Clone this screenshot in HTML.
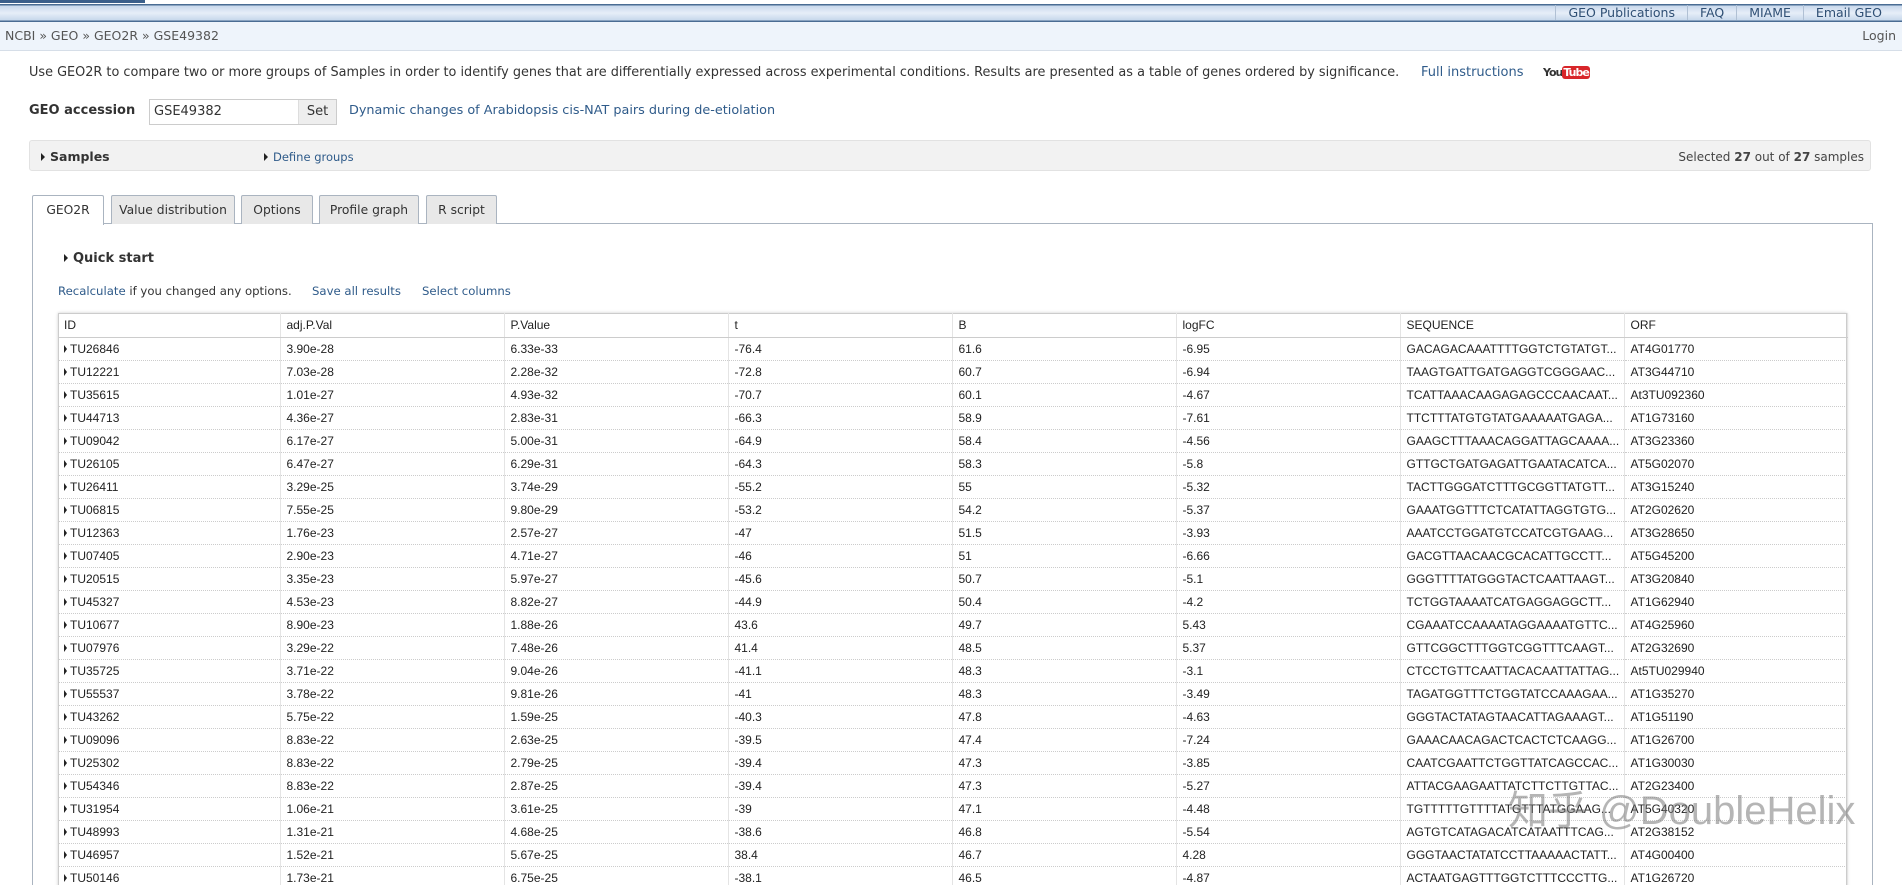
<!DOCTYPE html>
<html style="overflow:hidden;width:1902px;height:885px"><head><meta charset="utf-8"><style>
*{margin:0;padding:0;box-sizing:border-box}
body{width:1902px;height:885px;overflow:hidden;background:#fff;font-family:"DejaVu Sans",Verdana,sans-serif;font-size:13px;color:#333;position:relative}
.abs{position:absolute;white-space:nowrap}
a,.lk{color:#2f5b8a;text-decoration:none}
.topband{position:absolute;left:0;top:0;width:1902px;height:22px;background:linear-gradient(#fff 0,#fff 4px,#4a6c93 4px,#4a6c93 5px,#c9d9ec 6px,#e6eef8 13px,#c8d8ec 20px,#4a6c93 21px)}
.topblk{position:absolute;left:0;top:0;width:145px;height:3px;background:#3b5f8a}
.crumb{position:absolute;left:0;top:22px;width:1902px;height:29px;background:#eef4fb;border-bottom:1px solid #d6dee8}
.tri{display:inline-block;width:0;height:0;border-left:4px solid #222;border-top:4px solid transparent;border-bottom:4px solid transparent;margin-right:5px;vertical-align:0}
.tab{position:absolute;top:195px;height:29px;border:1px solid #aab4c0;border-bottom:none;background:#e8e8e8;font-size:12.3px;text-align:center;line-height:28px;color:#333;border-radius:2px 2px 0 0}
table{border-collapse:collapse;font-family:"Liberation Sans",Arial,sans-serif;font-size:12px;color:#222;table-layout:fixed}
td{height:23px;padding:0 6px;border-right:1px solid #e4e4e4;border-bottom:1px dotted #ccc;white-space:nowrap;overflow:hidden}
tr.h td{height:24px;border-bottom:1px solid #ccc}
</style></head><body>
<div class="topband"></div><div class="topblk"></div>
<div class="abs" style="top:5px;right:20px;height:16px;font-size:12.5px;line-height:16px;color:#2f4f74">
<span style="border-left:1px solid #b0c0d4;padding:0 12px">GEO Publications</span><span style="border-left:1px solid #b0c0d4;padding:0 12px">FAQ</span><span style="border-left:1px solid #b0c0d4;padding:0 12px">MIAME</span><span style="border-left:1px solid #b0c0d4;padding:0 0 0 12px">Email GEO</span></div>
<div class="crumb"></div>
<div class="abs" style="left:5px;top:28px;font-size:12.5px;color:#555">NCBI » GEO » GEO2R » GSE49382</div>
<div class="abs" style="right:6px;top:28px;font-size:12.5px;color:#555">Login</div>

<div class="abs" style="left:29px;top:65px;font-size:12.85px;color:#333">Use GEO2R to compare two or more groups of Samples in order to identify genes that are differentially expressed across experimental conditions. Results are presented as a table of genes ordered by significance.</div>
<div class="abs lk" style="left:1421px;top:65px">Full instructions</div>
<div class="abs" style="left:1543px;top:66px;font-size:11px;font-weight:bold;letter-spacing:-1px"><span style="color:#333">You</span><span style="background:#d8262a;color:#fff;border-radius:3px;padding:0 1px">Tube</span></div>

<div class="abs" style="left:29px;top:103px;font-weight:bold;color:#333">GEO accession</div>
<div class="abs" style="left:149px;top:99px;width:188px;height:26px;border:1px solid #ccc;background:#fff"></div>
<div class="abs" style="left:154px;top:104px;font-size:13px">GSE49382</div>
<div class="abs" style="left:298px;top:100px;width:38px;height:24px;background:#eee;border-left:1px solid #ddd;text-align:center;line-height:24px">Set</div>
<div class="abs lk" style="left:349px;top:103px;font-size:12.8px">Dynamic changes of Arabidopsis cis-NAT pairs during de-etiolation</div>

<div class="abs" style="left:29px;top:140px;width:1842px;height:31px;background:#f2f2f2;border:1px solid #e2e2e2;border-radius:3px"></div>
<div class="abs" style="left:41px;top:149px;font-weight:bold;font-size:12.5px"><span class="tri"></span>Samples</div>
<div class="abs lk" style="left:264px;top:150px;font-size:11.5px"><span class="tri"></span>Define groups</div>
<div class="abs" style="right:38px;top:150px;font-size:12px;color:#444">Selected <b>27</b> out of <b>27</b> samples</div>

<div class="abs" style="left:32px;top:223px;width:1841px;height:680px;border:1px solid #aab4c0;background:#fff"></div>
<div class="tab" style="left:32px;width:72px;background:#fff;height:30px">GEO2R</div>
<div class="tab" style="left:111px;width:124px">Value distribution</div>
<div class="tab" style="left:241px;width:72px">Options</div>
<div class="tab" style="left:319px;width:100px">Profile graph</div>
<div class="tab" style="left:426px;width:71px">R script</div>

<div class="abs" style="left:64px;top:251px;font-weight:bold"><span class="tri"></span>Quick start</div>
<div class="abs" style="left:58px;top:284px;font-size:11.7px"><span class="lk">Recalculate</span> if you changed any options.</div>
<div class="abs lk" style="left:312px;top:284px;font-size:11.7px">Save all results</div>
<div class="abs lk" style="left:422px;top:284px;font-size:11.7px">Select columns</div>

<div class="abs" style="left:58px;top:313px;width:1789px;height:600px;border:1px solid #ccc;box-shadow:0 0 3px #ccc"></div>
<table class="abs" style="left:58px;top:313px;width:1789px">
<colgroup><col style="width:222px"><col style="width:224px"><col style="width:224px"><col style="width:224px"><col style="width:224px"><col style="width:224px"><col style="width:224px"><col style="width:223px"></colgroup>
<tr class="h"><td>ID</td><td>adj.P.Val</td><td>P.Value</td><td>t</td><td>B</td><td>logFC</td><td>SEQUENCE</td><td>ORF</td></tr>
<tr><td><span class="tri" style="border-left-width:3px;margin-right:3px"></span>TU26846</td><td>3.90e-28</td><td>6.33e-33</td><td>-76.4</td><td>61.6</td><td>-6.95</td><td>GACAGACAAATTTTGGTCTGTATGT...</td><td>AT4G01770</td></tr>
<tr><td><span class="tri" style="border-left-width:3px;margin-right:3px"></span>TU12221</td><td>7.03e-28</td><td>2.28e-32</td><td>-72.8</td><td>60.7</td><td>-6.94</td><td>TAAGTGATTGATGAGGTCGGGAAC...</td><td>AT3G44710</td></tr>
<tr><td><span class="tri" style="border-left-width:3px;margin-right:3px"></span>TU35615</td><td>1.01e-27</td><td>4.93e-32</td><td>-70.7</td><td>60.1</td><td>-4.67</td><td>TCATTAAACAAGAGAGCCCAACAAT...</td><td>At3TU092360</td></tr>
<tr><td><span class="tri" style="border-left-width:3px;margin-right:3px"></span>TU44713</td><td>4.36e-27</td><td>2.83e-31</td><td>-66.3</td><td>58.9</td><td>-7.61</td><td>TTCTTTATGTGTATGAAAAATGAGA...</td><td>AT1G73160</td></tr>
<tr><td><span class="tri" style="border-left-width:3px;margin-right:3px"></span>TU09042</td><td>6.17e-27</td><td>5.00e-31</td><td>-64.9</td><td>58.4</td><td>-4.56</td><td>GAAGCTTTAAACAGGATTAGCAAAA...</td><td>AT3G23360</td></tr>
<tr><td><span class="tri" style="border-left-width:3px;margin-right:3px"></span>TU26105</td><td>6.47e-27</td><td>6.29e-31</td><td>-64.3</td><td>58.3</td><td>-5.8</td><td>GTTGCTGATGAGATTGAATACATCA...</td><td>AT5G02070</td></tr>
<tr><td><span class="tri" style="border-left-width:3px;margin-right:3px"></span>TU26411</td><td>3.29e-25</td><td>3.74e-29</td><td>-55.2</td><td>55</td><td>-5.32</td><td>TACTTGGGATCTTTGCGGTTATGTT...</td><td>AT3G15240</td></tr>
<tr><td><span class="tri" style="border-left-width:3px;margin-right:3px"></span>TU06815</td><td>7.55e-25</td><td>9.80e-29</td><td>-53.2</td><td>54.2</td><td>-5.37</td><td>GAAATGGTTTCTCATATTAGGTGTG...</td><td>AT2G02620</td></tr>
<tr><td><span class="tri" style="border-left-width:3px;margin-right:3px"></span>TU12363</td><td>1.76e-23</td><td>2.57e-27</td><td>-47</td><td>51.5</td><td>-3.93</td><td>AAATCCTGGATGTCCATCGTGAAG...</td><td>AT3G28650</td></tr>
<tr><td><span class="tri" style="border-left-width:3px;margin-right:3px"></span>TU07405</td><td>2.90e-23</td><td>4.71e-27</td><td>-46</td><td>51</td><td>-6.66</td><td>GACGTTAACAACGCACATTGCCTT...</td><td>AT5G45200</td></tr>
<tr><td><span class="tri" style="border-left-width:3px;margin-right:3px"></span>TU20515</td><td>3.35e-23</td><td>5.97e-27</td><td>-45.6</td><td>50.7</td><td>-5.1</td><td>GGGTTTTATGGGTACTCAATTAAGT...</td><td>AT3G20840</td></tr>
<tr><td><span class="tri" style="border-left-width:3px;margin-right:3px"></span>TU45327</td><td>4.53e-23</td><td>8.82e-27</td><td>-44.9</td><td>50.4</td><td>-4.2</td><td>TCTGGTAAAATCATGAGGAGGCTT...</td><td>AT1G62940</td></tr>
<tr><td><span class="tri" style="border-left-width:3px;margin-right:3px"></span>TU10677</td><td>8.90e-23</td><td>1.88e-26</td><td>43.6</td><td>49.7</td><td>5.43</td><td>CGAAATCCAAAATAGGAAAATGTTC...</td><td>AT4G25960</td></tr>
<tr><td><span class="tri" style="border-left-width:3px;margin-right:3px"></span>TU07976</td><td>3.29e-22</td><td>7.48e-26</td><td>41.4</td><td>48.5</td><td>5.37</td><td>GTTCGGCTTTGGTCGGTTTCAAGT...</td><td>AT2G32690</td></tr>
<tr><td><span class="tri" style="border-left-width:3px;margin-right:3px"></span>TU35725</td><td>3.71e-22</td><td>9.04e-26</td><td>-41.1</td><td>48.3</td><td>-3.1</td><td>CTCCTGTTCAATTACACAATTATTAG...</td><td>At5TU029940</td></tr>
<tr><td><span class="tri" style="border-left-width:3px;margin-right:3px"></span>TU55537</td><td>3.78e-22</td><td>9.81e-26</td><td>-41</td><td>48.3</td><td>-3.49</td><td>TAGATGGTTTCTGGTATCCAAAGAA...</td><td>AT1G35270</td></tr>
<tr><td><span class="tri" style="border-left-width:3px;margin-right:3px"></span>TU43262</td><td>5.75e-22</td><td>1.59e-25</td><td>-40.3</td><td>47.8</td><td>-4.63</td><td>GGGTACTATAGTAACATTAGAAAGT...</td><td>AT1G51190</td></tr>
<tr><td><span class="tri" style="border-left-width:3px;margin-right:3px"></span>TU09096</td><td>8.83e-22</td><td>2.63e-25</td><td>-39.5</td><td>47.4</td><td>-7.24</td><td>GAAACAACAGACTCACTCTCAAGG...</td><td>AT1G26700</td></tr>
<tr><td><span class="tri" style="border-left-width:3px;margin-right:3px"></span>TU25302</td><td>8.83e-22</td><td>2.79e-25</td><td>-39.4</td><td>47.3</td><td>-3.85</td><td>CAATCGAATTCTGGTTATCAGCCAC...</td><td>AT1G30030</td></tr>
<tr><td><span class="tri" style="border-left-width:3px;margin-right:3px"></span>TU54346</td><td>8.83e-22</td><td>2.87e-25</td><td>-39.4</td><td>47.3</td><td>-5.27</td><td>ATTACGAAGAATTATCTTCTTGTTAC...</td><td>AT2G23400</td></tr>
<tr><td><span class="tri" style="border-left-width:3px;margin-right:3px"></span>TU31954</td><td>1.06e-21</td><td>3.61e-25</td><td>-39</td><td>47.1</td><td>-4.48</td><td>TGTTTTTGTTTTATGTTTATGGAAG...</td><td>AT5G40320</td></tr>
<tr><td><span class="tri" style="border-left-width:3px;margin-right:3px"></span>TU48993</td><td>1.31e-21</td><td>4.68e-25</td><td>-38.6</td><td>46.8</td><td>-5.54</td><td>AGTGTCATAGACATCATAATTTCAG...</td><td>AT2G38152</td></tr>
<tr><td><span class="tri" style="border-left-width:3px;margin-right:3px"></span>TU46957</td><td>1.52e-21</td><td>5.67e-25</td><td>38.4</td><td>46.7</td><td>4.28</td><td>GGGTAACTATATCCTTAAAAACTATT...</td><td>AT4G00400</td></tr>
<tr><td><span class="tri" style="border-left-width:3px;margin-right:3px"></span>TU50146</td><td>1.73e-21</td><td>6.75e-25</td><td>-38.1</td><td>46.5</td><td>-4.87</td><td>ACTAATGAGTTTGGTCTTTCCCTTG...</td><td>AT1G26720</td></tr>
</table>
<div class="abs" style="left:1508px;top:778px;font-family:'Liberation Sans','Noto Sans CJK SC',sans-serif;font-size:40px;color:rgba(120,120,120,0.55)">知乎 @DoubleHelix</div>
</body></html>
